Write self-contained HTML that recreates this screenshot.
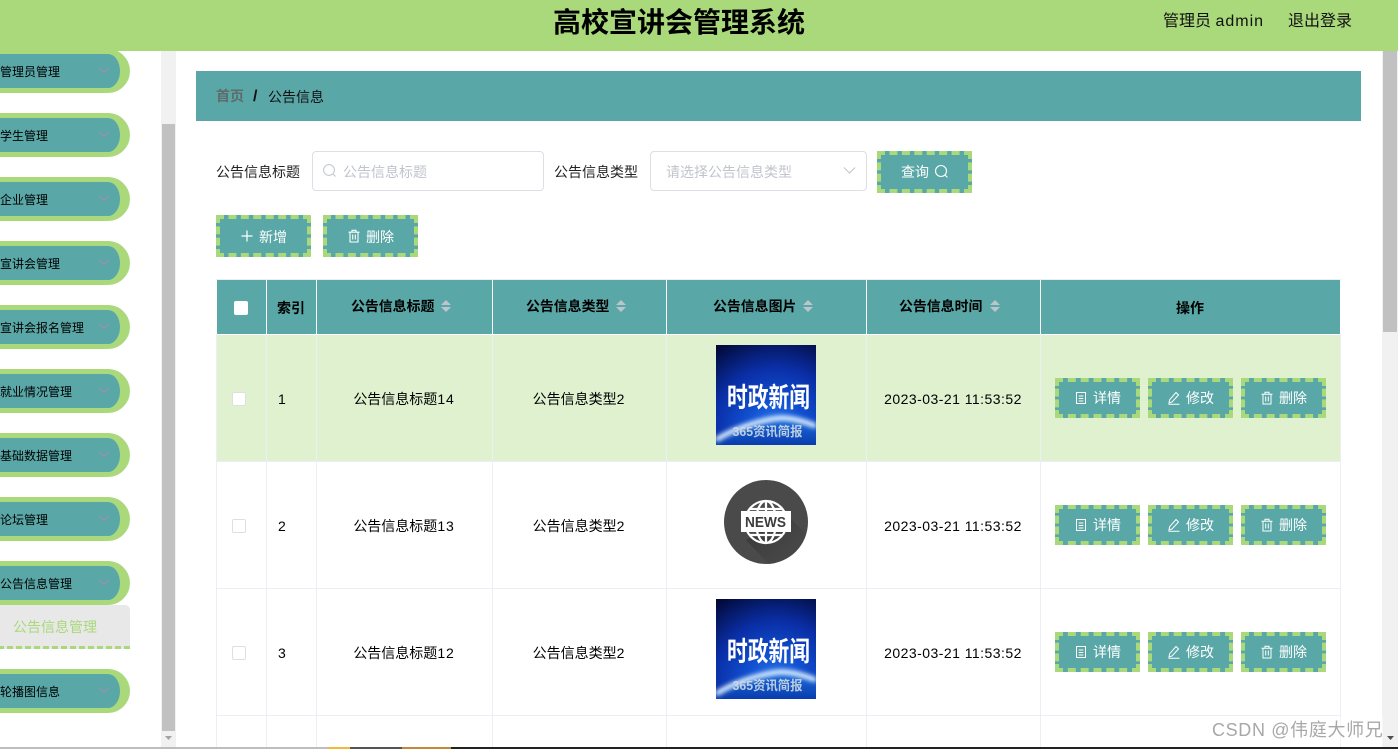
<!DOCTYPE html>
<html lang="zh-CN">
<head>
<meta charset="utf-8">
<title>高校宣讲会管理系统</title>
<style>
*{box-sizing:border-box;margin:0;padding:0}
html,body{width:1398px;height:749px;overflow:hidden;background:#fff}
body{position:relative;font-family:"Liberation Sans","Noto Sans CJK SC",sans-serif;font-size:14px;color:#000}
.a{position:absolute;white-space:nowrap}
.t{position:absolute;white-space:nowrap;line-height:20px;height:20px}
.c{text-align:center}
.n{letter-spacing:.9px}
#hd{left:0;top:0;width:1398px;height:51px;background:#a9d97a}
.mi{position:absolute;left:-30px;width:160px;height:44px;border:solid #a9d97a;border-width:5px 10px 5px 0;border-radius:0 22px 22px 0;background:#5aa7a7}
.ml{position:absolute;left:0;font-size:12px;line-height:18px;color:#000;white-space:nowrap}
.ch{position:absolute;left:98px}
.btn{position:absolute;background:#5aa7a7;border:4px dashed #a9d97a;color:#fff;font-size:14px;line-height:20px;white-space:nowrap}
.btn svg{position:absolute}
.btn span{position:absolute;top:50%;margin-top:-9px}
.hl{position:absolute;top:280px;width:1px;height:54px;background:#fff}
.vl{position:absolute;top:334px;width:1px;height:414px;background:#ebeef5}
.hr{position:absolute;left:216px;width:1125px;height:1px;background:#ebeef5}
.th{font-weight:bold}
.cb{position:absolute;left:232px;width:14px;height:14px;background:#fff;border:1px solid #dcdfe6;border-radius:2px}
</style>
</head>
<body>

<!-- sidebar -->
<div class="mi" style="top:49px"></div><div class="ml" style="top:63px">管理员管理</div>
<div class="mi" style="top:113px"></div><div class="ml" style="top:127px">学生管理</div>
<div class="mi" style="top:177px"></div><div class="ml" style="top:191px">企业管理</div>
<div class="mi" style="top:241px"></div><div class="ml" style="top:255px">宣讲会管理</div>
<div class="mi" style="top:305px"></div><div class="ml" style="top:319px">宣讲会报名管理</div>
<div class="mi" style="top:369px"></div><div class="ml" style="top:383px">就业情况管理</div>
<div class="mi" style="top:433px"></div><div class="ml" style="top:447px">基础数据管理</div>
<div class="mi" style="top:497px"></div><div class="ml" style="top:511px">论坛管理</div>
<div class="mi" style="top:561px"></div><div class="ml" style="top:575px">公告信息管理</div>
<div class="mi" style="top:669px"></div><div class="ml" style="top:683px">轮播图信息</div>

<svg class="ch" style="top:67px" width="12" height="7" viewBox="0 0 12 7"><path d="M1.5 1 6 5.5 10.5 1" fill="none" stroke="#a58cb0" stroke-width="1.2"/></svg>
<svg class="ch" style="top:131px" width="12" height="7" viewBox="0 0 12 7"><path d="M1.5 1 6 5.5 10.5 1" fill="none" stroke="#a58cb0" stroke-width="1.2"/></svg>
<svg class="ch" style="top:195px" width="12" height="7" viewBox="0 0 12 7"><path d="M1.5 1 6 5.5 10.5 1" fill="none" stroke="#a58cb0" stroke-width="1.2"/></svg>
<svg class="ch" style="top:259px" width="12" height="7" viewBox="0 0 12 7"><path d="M1.5 1 6 5.5 10.5 1" fill="none" stroke="#a58cb0" stroke-width="1.2"/></svg>
<svg class="ch" style="top:323px" width="12" height="7" viewBox="0 0 12 7"><path d="M1.5 1 6 5.5 10.5 1" fill="none" stroke="#a58cb0" stroke-width="1.2"/></svg>
<svg class="ch" style="top:387px" width="12" height="7" viewBox="0 0 12 7"><path d="M1.5 1 6 5.5 10.5 1" fill="none" stroke="#a58cb0" stroke-width="1.2"/></svg>
<svg class="ch" style="top:451px" width="12" height="7" viewBox="0 0 12 7"><path d="M1.5 1 6 5.5 10.5 1" fill="none" stroke="#a58cb0" stroke-width="1.2"/></svg>
<svg class="ch" style="top:515px" width="12" height="7" viewBox="0 0 12 7"><path d="M1.5 1 6 5.5 10.5 1" fill="none" stroke="#a58cb0" stroke-width="1.2"/></svg>
<svg class="ch" style="top:579px" width="12" height="7" viewBox="0 0 12 7"><path d="M1.5 1 6 5.5 10.5 1" fill="none" stroke="#a58cb0" stroke-width="1.2"/></svg>
<svg class="ch" style="top:687px" width="12" height="7" viewBox="0 0 12 7"><path d="M1.5 1 6 5.5 10.5 1" fill="none" stroke="#a58cb0" stroke-width="1.2"/></svg>

<div class="a" style="left:-2px;top:605px;width:132px;height:44px;background:#e8e8e8;border-bottom:3px dashed #a9d97a;border-radius:0 5px 0 0"></div>
<div class="t" style="left:13px;top:617px;color:#a9d97a">公告信息管理</div>

<!-- sidebar scrollbar -->
<div class="a" style="left:161px;top:51px;width:15px;height:696px;background:#f1f1f1"></div>
<div class="a" style="left:162px;top:124px;width:13px;height:607px;background:#c1c1c1"></div>
<svg class="a" style="left:164px;top:735px" width="9" height="6" viewBox="0 0 9 6"><path d="M1 1h7L4.5 5z" fill="#a3a3a3"/></svg>

<!-- main scrollbar -->
<div class="a" style="left:1382px;top:51px;width:16px;height:696px;background:#f1f1f1"></div>
<div class="a" style="left:1383px;top:51px;width:14px;height:281px;background:#c1c1c1"></div>
<svg class="a" style="left:1386px;top:735px" width="9" height="6" viewBox="0 0 9 6"><path d="M1 1h7L4.5 5z" fill="#505050"/></svg>

<!-- header -->
<div class="a" id="hd"></div>
<div class="a c" style="left:479px;top:2px;width:400px;font-size:28px;line-height:42px;font-weight:bold;color:#000">高校宣讲会管理系统</div>
<div class="a" style="left:1163px;top:10px;font-size:16px;line-height:24px;color:#111">管理员 <span style="letter-spacing:1px">admin</span></div>
<div class="a" style="left:1288px;top:10px;font-size:16px;line-height:24px;color:#111">退出登录</div>

<!-- breadcrumb -->
<div class="a" style="left:196px;top:71px;width:1165px;height:50px;background:#5aa7a7"></div>
<div class="t" style="left:216px;top:86px;font-weight:bold;color:#5f6b6b">首页</div>
<div class="t" style="left:253px;top:87px;font-weight:bold;font-size:16px;color:#111">/</div>
<div class="t" style="left:268px;top:87px;font-size:14px;color:#111">公告信息</div>

<!-- search -->
<div class="t" style="left:216px;top:162px;color:#222">公告信息标题</div>
<div class="a" style="left:312px;top:151px;width:232px;height:40px;border:1px solid #dcdfe6;border-radius:4px;background:#fff"></div>
<svg class="a" style="left:322px;top:163px" width="15" height="15" viewBox="0 0 15 15"><circle cx="7" cy="7" r="5.4" fill="none" stroke="#c0c4cc" stroke-width="1"/><path d="M11 11l2.5 2.5" stroke="#c0c4cc" stroke-width="1" fill="none"/></svg>
<div class="t" style="left:343px;top:162px;color:#c0c4cc">公告信息标题</div>
<div class="t" style="left:554px;top:162px;color:#222">公告信息类型</div>
<div class="a" style="left:650px;top:151px;width:217px;height:40px;border:1px solid #dcdfe6;border-radius:4px;background:#fff"></div>
<div class="t" style="left:666px;top:162px;color:#c0c4cc">请选择公告信息类型</div>
<svg class="a" style="left:843px;top:166px" width="13" height="9" viewBox="0 0 13 9"><path d="M1 1.5 6.5 7 12 1.5" fill="none" stroke="#c0c4cc" stroke-width="1"/></svg>

<div class="btn" style="left:877px;top:151px;width:95px;height:42px">
<span style="left:20px;margin-top:-10px">查询</span>
<svg style="left:53px;top:9px" width="15" height="15" viewBox="0 0 15 15"><circle cx="7" cy="7" r="5.5" fill="none" stroke="#fff" stroke-width="1.1"/><path d="M11 11l2.4 2.4" stroke="#fff" stroke-width="1.1" fill="none"/></svg>
</div>

<div class="btn" style="left:216px;top:215px;width:95px;height:42px">
<svg style="left:20px;top:10px" width="14" height="14" viewBox="0 0 14 14"><path d="M7 1.5v11M1.5 7h11" stroke="#fff" stroke-width="1.2" fill="none"/></svg>
<span style="left:39px">新增</span>
</div>
<div class="btn" style="left:323px;top:215px;width:95px;height:42px">
<svg style="left:20px;top:10px" width="14" height="14" viewBox="0 0 14 14"><path d="M1.5 3.2h11M5 3V1.3h4V3M3 3.2V13h8V3.2M5.7 5.5v5M8.3 5.5v5" stroke="#fff" stroke-width="1.1" fill="none"/></svg>
<span style="left:39px">删除</span>
</div>

<!-- table -->
<div class="a" style="left:217px;top:280px;width:1123px;height:54px;background:#5aa7a7"></div>
<div class="a" style="left:217px;top:335px;width:1123px;height:126px;background:#dff1cf"></div>
<div class="a" style="left:216px;top:279px;width:1125px;height:1px;background:#ebeef5"></div>
<div class="hl" style="left:266px"></div>
<div class="hl" style="left:316px"></div>
<div class="hl" style="left:492px"></div>
<div class="hl" style="left:666px"></div>
<div class="hl" style="left:866px"></div>
<div class="hl" style="left:1040px"></div>

<div class="vl" style="left:216px"></div>
<div class="vl" style="left:266px"></div>
<div class="vl" style="left:316px"></div>
<div class="vl" style="left:492px"></div>
<div class="vl" style="left:666px"></div>
<div class="vl" style="left:866px"></div>
<div class="vl" style="left:1040px"></div>
<div class="vl" style="left:1340px"></div>
<div class="hr" style="top:461px"></div>
<div class="hr" style="top:588px"></div>
<div class="hr" style="top:715px"></div>

<div class="a" style="left:234px;top:301px;width:14px;height:14px;background:#fff;border-radius:2px"></div>
<div class="t th" style="left:277px;top:298px;font-size:14px">索引</div>
<div class="t th" style="left:351px;top:296px;font-size:13.9px">公告信息标题</div>
<div class="t th" style="left:526px;top:296px;font-size:13.9px">公告信息类型</div>
<div class="t th" style="left:713px;top:296px;font-size:13.9px">公告信息图片</div>
<div class="t th" style="left:899px;top:296px;font-size:13.9px">公告信息时间</div>
<div class="t th" style="left:1176px;top:298px;font-size:14px">操作</div>

<svg class="a" style="left:441px;top:299px" width="10" height="14" viewBox="0 0 10 14"><path d="M5 1 10 6H0zM5 13 0 8h10z" fill="#bcc5cc"/></svg>
<svg class="a" style="left:616px;top:299px" width="10" height="14" viewBox="0 0 10 14"><path d="M5 1 10 6H0zM5 13 0 8h10z" fill="#bcc5cc"/></svg>
<svg class="a" style="left:803px;top:299px" width="10" height="14" viewBox="0 0 10 14"><path d="M5 1 10 6H0zM5 13 0 8h10z" fill="#bcc5cc"/></svg>
<svg class="a" style="left:990px;top:299px" width="10" height="14" viewBox="0 0 10 14"><path d="M5 1 10 6H0zM5 13 0 8h10z" fill="#bcc5cc"/></svg>

<!-- row 1 -->
<div class="cb" style="top:392px"></div>
<div class="t" style="left:278px;top:389px">1</div>
<div class="t c" style="left:316px;top:389px;width:176px">公告信息标题<span class="n">14</span></div>
<div class="t c" style="left:492px;top:389px;width:174px">公告信息类型<span class="n">2</span></div>
<div class="t c" style="left:866px;top:389px;width:174px;letter-spacing:.46px">2023-03-21 11:53:52</div>
<svg class="a" style="left:716px;top:345px" width="100" height="100" viewBox="0 0 100 100">
<defs>
<radialGradient id="b1" cx="60%" cy="85%" r="100%"><stop offset="0" stop-color="#2f7cf0"/><stop offset=".3" stop-color="#1150d0"/><stop offset=".62" stop-color="#0a2fa8"/><stop offset="1" stop-color="#020a3a"/></radialGradient>
<linearGradient id="e1" x1="0" y1="0" x2="0" y2="1"><stop offset="0" stop-color="#1c6fe0"/><stop offset="1" stop-color="#0a3cae"/></linearGradient>
<filter id="f1" x="-20%" y="-60%" width="140%" height="220%"><feGaussianBlur stdDeviation="2.5"/></filter>
</defs>
<rect width="100" height="100" fill="url(#b1)"/>
<path d="M0 100V93C20 80 50 72 65 72 78 72 90 76 100 80V100Z" fill="url(#e1)"/>
<path d="M0 95C20 82 50 74 65 73 78 73 90 77 100 81" fill="none" stroke="#e6f4ff" stroke-width="5" filter="url(#f1)"/>
<text x="52.5" y="62" text-anchor="middle" font-family="'Noto Sans CJK SC',sans-serif" font-weight="bold" font-size="27" textLength="83" lengthAdjust="spacingAndGlyphs" fill="#fff">时政新闻</text>
<text x="51.5" y="91" text-anchor="middle" font-family="'Liberation Sans','Noto Sans CJK SC',sans-serif" font-weight="bold" font-size="13" textLength="70" lengthAdjust="spacingAndGlyphs" fill="#cfdbe4" opacity=".9">365资讯简报</text>
</svg>
<div class="btn" style="left:1055px;top:378px;width:85px;height:40px"><svg style="left:15px;top:9px" width="14" height="14" viewBox="0 0 14 14"><path d="M2.5 1.5h9v11h-9zM4.7 5h4.6M4.7 7.5h4.6M4.7 10h4.6" fill="none" stroke="#fff" stroke-width="1"/></svg><span style="left:34px;margin-top:-10px">详情</span></div>
<div class="btn" style="left:1148px;top:378px;width:85px;height:40px"><svg style="left:15px;top:9px" width="14" height="14" viewBox="0 0 14 14"><path d="M9 1.5 11.5 4 5 11 2 12l.6-3.2zM1.5 13.2h11" fill="none" stroke="#fff" stroke-width="1"/></svg><span style="left:34px;margin-top:-10px">修改</span></div>
<div class="btn" style="left:1241px;top:378px;width:85px;height:40px"><svg style="left:15px;top:9px" width="14" height="14" viewBox="0 0 14 14"><path d="M1.5 3.2h11M5 3V1.3h4V3M3 3.2V13h8V3.2M5.7 5.5v5M8.3 5.5v5" stroke="#fff" stroke-width="1" fill="none"/></svg><span style="left:34px;margin-top:-10px">删除</span></div>

<!-- row 2 -->
<div class="cb" style="top:519px"></div>
<div class="t" style="left:278px;top:516px">2</div>
<div class="t c" style="left:316px;top:516px;width:176px">公告信息标题<span class="n">13</span></div>
<div class="t c" style="left:492px;top:516px;width:174px">公告信息类型<span class="n">2</span></div>
<div class="t c" style="left:866px;top:516px;width:174px;letter-spacing:.46px">2023-03-21 11:53:52</div>
<svg class="a" style="left:716px;top:472px" width="100" height="100" viewBox="0 0 100 100">
<defs>
<linearGradient id="s1" x1="0" y1="0" x2="1" y2="1"><stop offset="0" stop-color="#2e2d2d" stop-opacity=".9"/><stop offset="1" stop-color="#4b4a4a" stop-opacity="0"/></linearGradient>
<clipPath id="cc"><circle cx="50" cy="50" r="42"/></clipPath>
</defs>
<circle cx="50" cy="50" r="42" fill="#4b4a4a"/>
<path d="M70 42 100 72V100H60L30 68Z" fill="url(#s1)" clip-path="url(#cc)"/>
<g fill="none" stroke="#fff" stroke-width="2.2">
<circle cx="50" cy="50" r="21"/>
<ellipse cx="50" cy="50" rx="10" ry="21"/>
<path d="M50 29v42M33 37h34M33 63h34"/>
</g>
<rect x="25" y="39" width="50" height="21" fill="#fff"/>
<text x="49.5" y="55" text-anchor="middle" font-family="'Liberation Sans',sans-serif" font-weight="bold" font-size="15" fill="#3d3d3d" textLength="41" lengthAdjust="spacingAndGlyphs">NEWS</text>
</svg>
<div class="btn" style="left:1055px;top:505px;width:85px;height:40px"><svg style="left:15px;top:9px" width="14" height="14" viewBox="0 0 14 14"><path d="M2.5 1.5h9v11h-9zM4.7 5h4.6M4.7 7.5h4.6M4.7 10h4.6" fill="none" stroke="#fff" stroke-width="1"/></svg><span style="left:34px;margin-top:-10px">详情</span></div>
<div class="btn" style="left:1148px;top:505px;width:85px;height:40px"><svg style="left:15px;top:9px" width="14" height="14" viewBox="0 0 14 14"><path d="M9 1.5 11.5 4 5 11 2 12l.6-3.2zM1.5 13.2h11" fill="none" stroke="#fff" stroke-width="1"/></svg><span style="left:34px;margin-top:-10px">修改</span></div>
<div class="btn" style="left:1241px;top:505px;width:85px;height:40px"><svg style="left:15px;top:9px" width="14" height="14" viewBox="0 0 14 14"><path d="M1.5 3.2h11M5 3V1.3h4V3M3 3.2V13h8V3.2M5.7 5.5v5M8.3 5.5v5" stroke="#fff" stroke-width="1" fill="none"/></svg><span style="left:34px;margin-top:-10px">删除</span></div>

<!-- row 3 -->
<div class="cb" style="top:646px"></div>
<div class="t" style="left:278px;top:643px">3</div>
<div class="t c" style="left:316px;top:643px;width:176px">公告信息标题<span class="n">12</span></div>
<div class="t c" style="left:492px;top:643px;width:174px">公告信息类型<span class="n">2</span></div>
<div class="t c" style="left:866px;top:643px;width:174px;letter-spacing:.46px">2023-03-21 11:53:52</div>
<svg class="a" style="left:716px;top:599px" width="100" height="100" viewBox="0 0 100 100">
<rect width="100" height="100" fill="url(#b1)"/>
<path d="M0 100V93C20 80 50 72 65 72 78 72 90 76 100 80V100Z" fill="url(#e1)"/>
<path d="M0 95C20 82 50 74 65 73 78 73 90 77 100 81" fill="none" stroke="#e6f4ff" stroke-width="5" filter="url(#f1)"/>
<text x="52.5" y="62" text-anchor="middle" font-family="'Noto Sans CJK SC',sans-serif" font-weight="bold" font-size="27" textLength="83" lengthAdjust="spacingAndGlyphs" fill="#fff">时政新闻</text>
<text x="51.5" y="91" text-anchor="middle" font-family="'Liberation Sans','Noto Sans CJK SC',sans-serif" font-weight="bold" font-size="13" textLength="70" lengthAdjust="spacingAndGlyphs" fill="#cfdbe4" opacity=".9">365资讯简报</text>
</svg>
<div class="btn" style="left:1055px;top:632px;width:85px;height:40px"><svg style="left:15px;top:9px" width="14" height="14" viewBox="0 0 14 14"><path d="M2.5 1.5h9v11h-9zM4.7 5h4.6M4.7 7.5h4.6M4.7 10h4.6" fill="none" stroke="#fff" stroke-width="1"/></svg><span style="left:34px;margin-top:-10px">详情</span></div>
<div class="btn" style="left:1148px;top:632px;width:85px;height:40px"><svg style="left:15px;top:9px" width="14" height="14" viewBox="0 0 14 14"><path d="M9 1.5 11.5 4 5 11 2 12l.6-3.2zM1.5 13.2h11" fill="none" stroke="#fff" stroke-width="1"/></svg><span style="left:34px;margin-top:-10px">修改</span></div>
<div class="btn" style="left:1241px;top:632px;width:85px;height:40px"><svg style="left:15px;top:9px" width="14" height="14" viewBox="0 0 14 14"><path d="M1.5 3.2h11M5 3V1.3h4V3M3 3.2V13h8V3.2M5.7 5.5v5M8.3 5.5v5" stroke="#fff" stroke-width="1" fill="none"/></svg><span style="left:34px;margin-top:-10px">删除</span></div>

<!-- bottom edge -->
<div class="a" style="left:0;top:747px;width:1398px;height:2px;background:#222"></div>
<div class="a" style="left:0;top:747px;width:328px;height:2px;background:#bdbdbd"></div>
<div class="a" style="left:328px;top:747px;width:22px;height:2px;background:#f0b93a"></div>
<div class="a" style="left:350px;top:747px;width:52px;height:2px;background:#555"></div>
<div class="a" style="left:402px;top:747px;width:49px;height:2px;background:#c08a3a"></div>

<!-- watermark -->
<div class="a" style="left:1212px;top:717px;font-size:18px;line-height:26px;letter-spacing:.65px;color:#a8a8a8;background:rgba(255,255,255,.4)">CSDN @伟庭大师兄</div>

</body>
</html>
